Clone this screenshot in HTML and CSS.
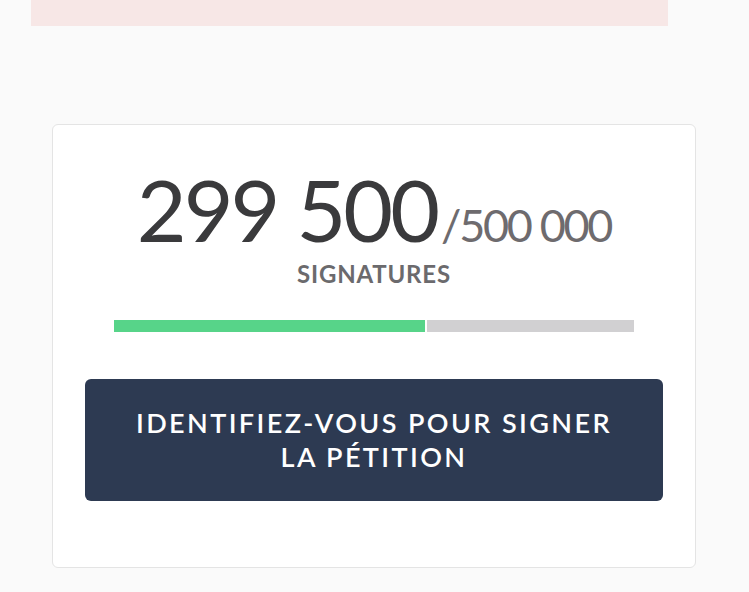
FILE: index.html
```html
<!DOCTYPE html>
<html lang="fr">
<head>
<meta charset="utf-8">
<link rel="stylesheet" href="styles.css">
</head>
<body>
<div class="alert"></div>
<section class="card">
  <div class="count">
    <span class="current">299 500</span><span class="goal">/500 000</span>
  </div>
  <div class="label">SIGNATURES</div>
  <div class="progress">
    <div class="fill" style="width: 59.9%"></div>
    <div class="rest"></div>
  </div>
  <button class="cta">IDENTIFIEZ-VOUS POUR SIGNER<br>LA PÉTITION</button>
</section>
</body>
</html>
```
FILE: styles.css
```css
html, body {
  margin: 0;
  padding: 0;
  background: #fafafa;
  font-family: "Lato", "Open Sans", sans-serif;
}
.alert {
  margin-left: 31px;
  width: 637px;
  height: 26px;
  background: #f7e7e6;
}
.card {
  margin: 98px 0 0 52px;
  box-sizing: border-box;
  width: 644px;
  height: 444px;
  background: #fff;
  border: 1px solid #e4e4e4;
  border-radius: 6px;
  padding: 0 32px;
  display: flex;
  flex-direction: column;
  align-items: center;
}
.count {
  margin-top: 34px;
  height: 100px;
  display: flex;
  align-items: baseline;
  color: #3a3a3c;
  white-space: nowrap;
}
.current {
  font-size: 86px;
  font-weight: 400;
  letter-spacing: -3px;
  line-height: 100px;
  margin-right: 4px;
}
.goal {
  font-size: 45px;
  color: #6e6b6e;
  letter-spacing: -2.3px;
  line-height: 100px;
}
.label {
  font-size: 24px;
  font-weight: 700;
  color: #6b6a6d;
  letter-spacing: 0.8px;
  line-height: 30px;
}
.progress {
  margin-top: 31px;
  width: 520px;
  height: 12px;
  display: flex;
  gap: 2px;
}
.fill {
  background: #57d489;
}
.rest {
  flex: 1;
  background: #d1d0d2;
}
.cta {
  margin-top: 47px;
  width: 578px;
  height: 122px;
  border: none;
  border-radius: 6px;
  background: #2d3a52;
  color: #fff;
  font-family: inherit;
  font-size: 27px;
  font-weight: 600;
  letter-spacing: 2.4px;
  line-height: 34px;
  padding: 0;
}
```
